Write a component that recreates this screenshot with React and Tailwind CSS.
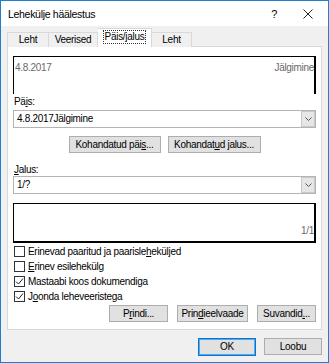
import React from "react";

const U = ({ children }) => (
  <span className="underline decoration-1 underline-offset-[1px]">{children}</span>
);

const Check = ({ checked, children }) => (
  <div className="flex items-center h-[15px] gap-[3px]">
    <div className="w-[11px] h-[11px] border border-[#333] bg-white flex items-center justify-center">
      {checked && (
        <svg width="9" height="9" viewBox="0 0 9 9">
          <path d="M1 4.5 L3.5 7 L8 1.5" fill="none" stroke="#222" strokeWidth="1" />
        </svg>
      )}
    </div>
    <span>{children}</span>
  </div>
);

const Btn = ({ w, children, focused }) => (
  <div
    className={
      "flex items-center justify-center bg-[#e1e1e1] border " +
      (focused
        ? "border-[#0078d7] shadow-[inset_0_0_0_1px_#5aa6e6] h-[18px]"
        : "border-[#adadad] h-[17px]")
    }
    style={{ width: w }}
  >
    {children}
  </div>
);

const Select = ({ value }) => (
  <div className="h-[18px] border border-[#b4b4b4] bg-white flex items-center">
    <span className="flex-1 pl-[3px]">{value}</span>
    <div className="w-[14px] h-[16px] border border-[#c8c8c8] bg-[#e6e6e6] flex items-center justify-center">
      <svg width="7" height="4" viewBox="0 0 7 4">
        <path d="M0.5 0.5 L3.5 3.5 L6.5 0.5" fill="none" stroke="#555" strokeWidth="1" />
      </svg>
    </div>
  </div>
);

export default function App() {
  return (
    <div className="w-[329px] h-[363px] bg-[#f0f0f0] border border-[#1c7fd1] flex flex-col text-[10px] leading-[12px] tracking-[-0.3px] text-black font-['Liberation_Sans',sans-serif]">
      {/* title bar */}
      <div className="h-[25px] bg-white flex items-center pl-[7px] shrink-0">
        <span className="flex-1 text-[10.5px]">Lehekülje häälestus</span>
        <span className="text-[11px] mr-[26px]">?</span>
        <svg width="10" height="10" viewBox="0 0 10 10" className="mr-[15px]">
          <path d="M0.5 0.5 L9.5 9.5 M9.5 0.5 L0.5 9.5" stroke="#222" strokeWidth="1" />
        </svg>
      </div>

      <div className="px-[6px] flex flex-col">
        {/* tabs */}
        <div className="flex items-end h-[21px] -mb-[1px] relative z-10">
          <div className="w-[42px] h-[15px] border border-b-0 border-[#d9d9d9] bg-[#f0f0f0] flex items-center justify-center">Leht</div>
          <div className="w-[49px] h-[15px] border border-b-0 border-l-0 border-[#d9d9d9] bg-[#f0f0f0] flex items-center justify-center">Veerised</div>
          <div className="w-[54px] h-[19px] border border-b-0 border-l-0 border-[#d9d9d9] bg-white flex items-center justify-center pb-[2px]">
            <span className="border border-dotted border-[#333] px-[1px]">Päis/jalus</span>
          </div>
          <div className="w-[40px] h-[15px] border border-b-0 border-l-0 border-[#d9d9d9] bg-[#f0f0f0] flex items-center justify-center">Leht</div>
        </div>

        {/* panel */}
        <div className="h-[284px] border border-[#d9d9d9] bg-white px-[5px] pt-[9px] flex flex-col">
          <div className="h-[38px] border-t border-l border-r-2 border-black flex justify-between items-start pt-[5px] pl-[1px] text-[#6a6a6a]">
            <span>4.8.2017</span>
            <span>Jälgimine</span>
          </div>

          <div className="mt-[2px] pl-[1px]">
            Pä<U>i</U>s:
          </div>
          <div className="mt-[2px]">
            <Select value="4.8.2017Jälgimine" />
          </div>

          <div className="mt-[8px] flex justify-center gap-[7px]">
            <Btn w="92px">
              Kohandatud päi<U>s</U>...
            </Btn>
            <Btn w="93px">
              Kohandat<U>u</U>d jalus...
            </Btn>
          </div>

          <div className="mt-[11px] pl-[1px]">
            <U>J</U>alus:
          </div>
          <Select value="1/?" />

          <div className="mt-[9px] h-[40px] border-t border-l border-r-2 border-b-2 border-black flex items-end justify-end pb-[4px] text-[#6a6a6a]">
            <span>1/1</span>
          </div>

          <div className="mt-[1px] flex flex-col pl-[1px]">
            <Check>
              Erinevad paaritud ja paarisle<U>h</U>eküljed
            </Check>
            <Check>
              <U>E</U>rinev esilehekülg
            </Check>
            <Check checked>
              Mastaabi koos dokumendi<U>g</U>a
            </Check>
            <Check checked>
              J<U>o</U>onda leheveeristega
            </Check>
          </div>

          <div className="mt-[1px] flex justify-end gap-[9px]">
            <Btn w="59px">
              P<U>r</U>indi...
            </Btn>
            <Btn w="71px">
              Prin<U>d</U>ieelvaade
            </Btn>
            <Btn w="59px">
              Suvandid<U>.</U>..
            </Btn>
          </div>
        </div>

        {/* footer buttons */}
        <div className="mt-[8px] flex justify-end gap-[8px]">
          <Btn w="58px" focused>
            OK
          </Btn>
          <Btn w="58px">Loobu</Btn>
        </div>
      </div>
    </div>
  );
}
